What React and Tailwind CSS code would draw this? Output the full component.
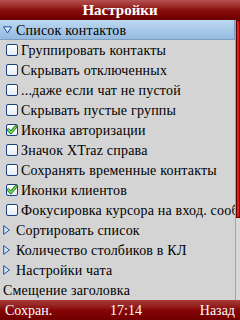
import React from "react";

const Box = ({ checked }) => (
  <svg width="12" height="12" viewBox="0 0 12 12" className="shrink-0">
    <defs>
      <linearGradient id="cbg" x1="0" y1="0" x2="0" y2="1">
        <stop offset="0" stopColor="#ffffff" />
        <stop offset="1" stopColor="#e6ecf6" />
      </linearGradient>
    </defs>
    <rect x="0.5" y="0.5" width="11" height="11" rx="1.5" fill="url(#cbg)" stroke="#1d3f86" />
    {checked && (
      <>
        <path d="M2.2 5.8 L4.8 8.6 L10 2.6" fill="none" stroke="#1f6e1f" strokeWidth="3" strokeLinejoin="round" strokeLinecap="round" />
        <path d="M2.2 5.8 L4.8 8.6 L10 2.6" fill="none" stroke="#7ae85a" strokeWidth="1.4" strokeLinejoin="round" strokeLinecap="round" />
      </>
    )}
  </svg>
);

const TriDown = () => (
  <svg width="9" height="8" viewBox="0 0 9 8" className="shrink-0">
    <polygon points="0.5,0.8 8.5,0.8 4.5,7" fill="#dbeafa" stroke="#1f4f9c" strokeLinejoin="round" />
  </svg>
);

const TriRight = () => (
  <svg width="7" height="10" viewBox="0 0 7 10" className="shrink-0">
    <defs>
      <linearGradient id="trg" x1="0" y1="0" x2="1" y2="0">
        <stop offset="0" stopColor="#c8def6" />
        <stop offset="1" stopColor="#eef5fd" />
      </linearGradient>
    </defs>
    <polygon points="0.7,0.7 6.3,5 0.7,9.3" fill="url(#trg)" stroke="#1f4f9c" strokeLinejoin="round" />
  </svg>
);

const items = [
  { t: "Группировать контакты", c: false },
  { t: "Скрывать отключенных", c: false },
  { t: "...даже если чат не пустой", c: false },
  { t: "Скрывать пустые группы", c: false },
  { t: "Иконка авторизации", c: true },
  { t: "Значок XTraz справа", c: false },
  { t: "Сохранять временные контакты", c: false },
  { t: "Иконки клиентов", c: true },
  { t: "Фокусировка курсора на вход. сообщ", c: false },
];

const subs = ["Сортировать список", "Количество столбиков в КЛ", "Настройки чата"];

export default function App() {
  return (
    <div
      className="w-[240px] h-[320px] flex flex-col overflow-hidden bg-[#d4d4d4] text-black"
      style={{ fontFamily: '"Liberation Serif", "DejaVu Serif", serif' }}
    >
      <div className="h-[20px] shrink-0 flex items-center justify-center bg-gradient-to-b from-[#b65252] via-[#8a0c0c] to-[#6c0000] text-white font-bold text-[15px] leading-none">
        Настройки
      </div>
      <div className="flex-1 flex min-h-0">
        <div className="flex-1 min-w-0 flex flex-col text-[14px] leading-none tracking-[0.2px]">
          <div className="h-[20px] flex items-center gap-[4px] pl-[3px] bg-gradient-to-b from-[#bcd7f0] to-[#95bbe0] border-r border-b border-[#7c9cc0] whitespace-nowrap overflow-hidden">
            <TriDown />
            <span className="pt-[2px]">Список контактов</span>
          </div>
          {items.map((it) => (
            <div key={it.t} className="h-[20px] flex items-center gap-[3px] pl-[6px] whitespace-nowrap overflow-hidden">
              <Box checked={it.c} />
              <span className="pt-[2px]">{it.t}</span>
            </div>
          ))}
          {subs.map((s) => (
            <div key={s} className="h-[20px] flex items-center gap-[6px] pl-[3px] whitespace-nowrap overflow-hidden">
              <TriRight />
              <span className="pt-[2px]">{s}</span>
            </div>
          ))}
          <div className="h-[20px] flex items-center pl-[3px] whitespace-nowrap overflow-hidden">
            <span className="pt-[2px]">Смещение заголовка</span>
          </div>
        </div>
        <div className="w-[5px] shrink-0 border-l border-[#a4a4a4] bg-[#d8d8d8] flex flex-col">
          <div className="h-[198px] w-[4px] border border-[#5a0000] bg-[#e41c1c]" />
        </div>
      </div>
      <div className="h-[20px] shrink-0 flex items-center justify-between px-[5px] bg-gradient-to-b from-[#a83a3a] via-[#860606] to-[#700000] text-white text-[14px] leading-none">
        <span className="pt-[2px]">Сохран.</span>
        <span className="pt-[2px]">17:14</span>
        <span className="pt-[2px]">Назад</span>
      </div>
    </div>
  );
}
